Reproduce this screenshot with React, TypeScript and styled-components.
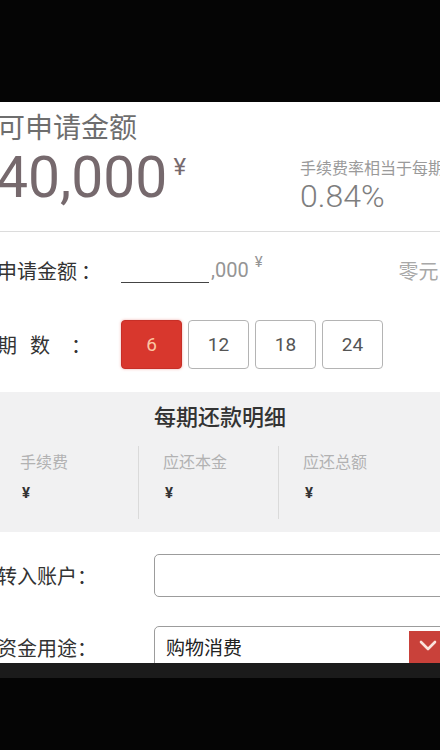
import React, { useState } from "react";
import styled, { createGlobalStyle } from "styled-components";

const GlobalStyle = createGlobalStyle`
  html, body {
    margin: 0;
    padding: 0;
    background: #050505;
  }
  body {
    font-family: Roboto, "Noto Sans CJK SC", sans-serif;
    width: 440px;
    height: 750px;
    overflow: hidden;
  }
`;

const TopBar = styled.div`
  height: 102px;
  background: #050505;
`;

const Screen = styled.main`
  height: 561px;
  background: #fff;
  overflow: hidden;
`;

const BottomStrip = styled.div`
  height: 15px;
  background: #1b1b1b;
`;

const Header = styled.section`
  height: 130px;
  border-bottom: 1px solid #dcdcdc;
  padding-top: 5px;
  box-sizing: border-box;
`;

const QuotaTitle = styled.h1`
  margin: 0 0 0 -3px;
  font-family: "Noto Sans CJK SC", sans-serif;
  font-size: 28px;
  line-height: 38px;
  font-weight: 400;
  color: #6e6e6e;
`;

const QuotaRow = styled.div`
  display: flex;
  align-items: flex-start;
  margin-top: 2px;
`;

const QuotaAmount = styled.div`
  width: 300px;
  flex-shrink: 0;
  margin-left: -4px;
  font-family: Roboto, sans-serif;
  font-size: 57px;
  line-height: 62px;
  color: #76696d;
  white-space: nowrap;
`;

const Yen = styled.sup<{ $size: number; $color: string; $top: number }>`
  font-size: ${(p) => p.$size}px;
  line-height: 1;
  color: ${(p) => p.$color};
  vertical-align: top;
  position: relative;
  top: ${(p) => p.$top}px;
  margin-left: 6px;
`;

const RateBox = styled.div`
  display: flex;
  flex-direction: column;
  padding-top: 10px;
  margin-left: 4px;
  white-space: nowrap;
`;

const RateLabel = styled.span`
  font-family: "Noto Sans CJK SC", sans-serif;
  font-size: 16px;
  line-height: 20px;
  color: #9a9a9a;
`;

const RateValue = styled.span`
  font-family: Roboto, sans-serif;
  font-size: 32px;
  line-height: 38px;
  font-weight: 300;
  color: #7e7e7e;
`;

const FormRow = styled.div<{ $height: number }>`
  display: flex;
  align-items: center;
  height: ${(p) => p.$height}px;
  white-space: nowrap;
`;

const Label = styled.label<{ $width: number; $spacing?: number }>`
  flex-shrink: 0;
  width: ${(p) => p.$width}px;
  margin-left: -3px;
  font-family: "Noto Sans CJK SC", sans-serif;
  font-size: 20px;
  letter-spacing: ${(p) => p.$spacing ?? 0}px;
  color: #333;
`;

const Colon = styled.span<{ $gap: number }>`
  margin-left: ${(p) => p.$gap}px;
  letter-spacing: 0;
`;

const Blank = styled.span`
  display: inline-block;
  width: 88px;
  height: 22px;
  border-bottom: 1.5px solid #444;
  margin-top: 2px;
`;

const Thousand = styled.span`
  font-family: Roboto, sans-serif;
  font-size: 20px;
  color: #959595;
  margin-left: 2px;
`;

const Hint = styled.span`
  margin-left: 136px;
  font-family: "Noto Sans CJK SC", sans-serif;
  font-size: 20px;
  color: #a8a8a8;
`;

const Periods = styled.div`
  display: flex;
  gap: 6px;
`;

const PeriodBtn = styled.button<{ $active: boolean }>`
  width: 61px;
  height: 49px;
  box-sizing: border-box;
  border-radius: 4px;
  border: 1.5px solid ${(p) => (p.$active ? "#c72f27" : "#b4b4b4")};
  background: ${(p) => (p.$active ? "#d8372d" : "#fff")};
  color: ${(p) => (p.$active ? "#fcc7a4" : "#555")};
  font-family: Roboto, sans-serif;
  font-size: 19px;
  padding: 0;
  cursor: pointer;
  box-shadow: ${(p) => (p.$active ? "0 0 3px rgba(216,55,45,0.4)" : "none")};
`;

const Detail = styled.section`
  margin-top: 12px;
  background: #f1f1f2;
  height: 140px;
  padding-top: 8px;
  box-sizing: border-box;
`;

const DetailTitle = styled.h2`
  margin: 0;
  text-align: center;
  font-family: "Noto Sans CJK SC", sans-serif;
  font-size: 22px;
  line-height: 30px;
  font-weight: 500;
  color: #333;
`;

const DetailGrid = styled.div`
  display: grid;
  grid-template-columns: 138px 140px 1fr;
  margin-top: 16px;
`;

const DetailCol = styled.div<{ $first?: boolean }>`
  height: 73px;
  padding-left: ${(p) => (p.$first ? 20 : 24)}px;
  padding-top: 4px;
  box-sizing: border-box;
  border-left: ${(p) => (p.$first ? "none" : "1.5px solid #dadada")};
  display: flex;
  flex-direction: column;
  gap: 10px;
`;

const DetailLabel = styled.span`
  font-family: "Noto Sans CJK SC", sans-serif;
  font-size: 16px;
  line-height: 22px;
  color: #b2b2b2;
`;

const DetailValue = styled.span`
  padding-left: 2px;
  font-family: Roboto, sans-serif;
  font-size: 15px;
  line-height: 22px;
  color: #333;
  font-weight: 700;
`;

const InputRow = styled.div<{ $top: number }>`
  display: flex;
  align-items: center;
  margin-top: ${(p) => p.$top}px;
  white-space: nowrap;
`;

const TextBox = styled.input`
  flex-shrink: 0;
  width: 300px;
  height: 43px;
  box-sizing: border-box;
  border: 1.5px solid #9c9c9c;
  border-radius: 5px;
  background: #fff;
  outline: none;
  padding: 0 12px;
  font-family: "Noto Sans CJK SC", sans-serif;
  font-size: 18px;
`;

const SelectBox = styled.div`
  flex-shrink: 0;
  width: 296px;
  height: 43px;
  box-sizing: border-box;
  border: 1.5px solid #9c9c9c;
  border-radius: 5px;
  display: flex;
  align-items: flex-start;
`;

const SelectText = styled.span`
  flex: 1;
  padding-left: 11px;
  font-family: "Noto Sans CJK SC", sans-serif;
  font-size: 19px;
  line-height: 40px;
  color: #222;
`;

const DropBtn = styled.span`
  width: 38px;
  height: 40px;
  margin-top: 4px;
  margin-right: 2px;
  background: #c9413a;
  display: flex;
  align-items: flex-start;
  justify-content: center;
  padding-top: 9px;
  box-sizing: border-box;
`;

const periods = [6, 12, 18, 24];

const details = [
  { label: "手续费", value: "¥" },
  { label: "应还本金", value: "¥" },
  { label: "应还总额", value: "¥" },
];

export default function App() {
  const [period, setPeriod] = useState(6);

  return (
    <>
      <GlobalStyle />
      <TopBar />
      <Screen>
        <Header>
          <QuotaTitle>可申请金额</QuotaTitle>
          <QuotaRow>
            <QuotaAmount>
              40,000
              <Yen $size={24} $color="#76696d" $top={8}>
                ¥
              </Yen>
            </QuotaAmount>
            <RateBox>
              <RateLabel>手续费率相当于每期</RateLabel>
              <RateValue>0.84%</RateValue>
            </RateBox>
          </QuotaRow>
        </Header>

        <FormRow $height={76}>
          <Label $width={124}>
            申请金额<Colon $gap={4}>：</Colon>
          </Label>
          <Blank />
          <Thousand>
            ,000
            <Yen $size={15} $color="#959595" $top={-3}>
              ¥
            </Yen>
          </Thousand>
          <Hint>零元</Hint>
        </FormRow>

        <FormRow $height={72}>
          <Label $width={124} $spacing={13}>
            期数<Colon $gap={8}>：</Colon>
          </Label>
          <Periods>
            {periods.map((n) => (
              <PeriodBtn key={n} $active={n === period} onClick={() => setPeriod(n)}>
                {n}
              </PeriodBtn>
            ))}
          </Periods>
        </FormRow>

        <Detail>
          <DetailTitle>每期还款明细</DetailTitle>
          <DetailGrid>
            {details.map((d, i) => (
              <DetailCol key={d.label} $first={i === 0}>
                <DetailLabel>{d.label}</DetailLabel>
                <DetailValue>{d.value}</DetailValue>
              </DetailCol>
            ))}
          </DetailGrid>
        </Detail>

        <InputRow $top={22}>
          <Label $width={157}>转入账户：</Label>
          <TextBox />
        </InputRow>

        <InputRow $top={29}>
          <Label $width={157}>资金用途：</Label>
          <SelectBox>
            <SelectText>购物消费</SelectText>
            <DropBtn>
              <svg width="20" height="12" viewBox="0 0 20 12">
                <polyline
                  points="3,2 10,9 17,2"
                  fill="none"
                  stroke="#fbe2dc"
                  strokeWidth="2.6"
                  strokeLinecap="round"
                  strokeLinejoin="round"
                />
              </svg>
            </DropBtn>
          </SelectBox>
        </InputRow>
      </Screen>
      <BottomStrip />
    </>
  );
}
